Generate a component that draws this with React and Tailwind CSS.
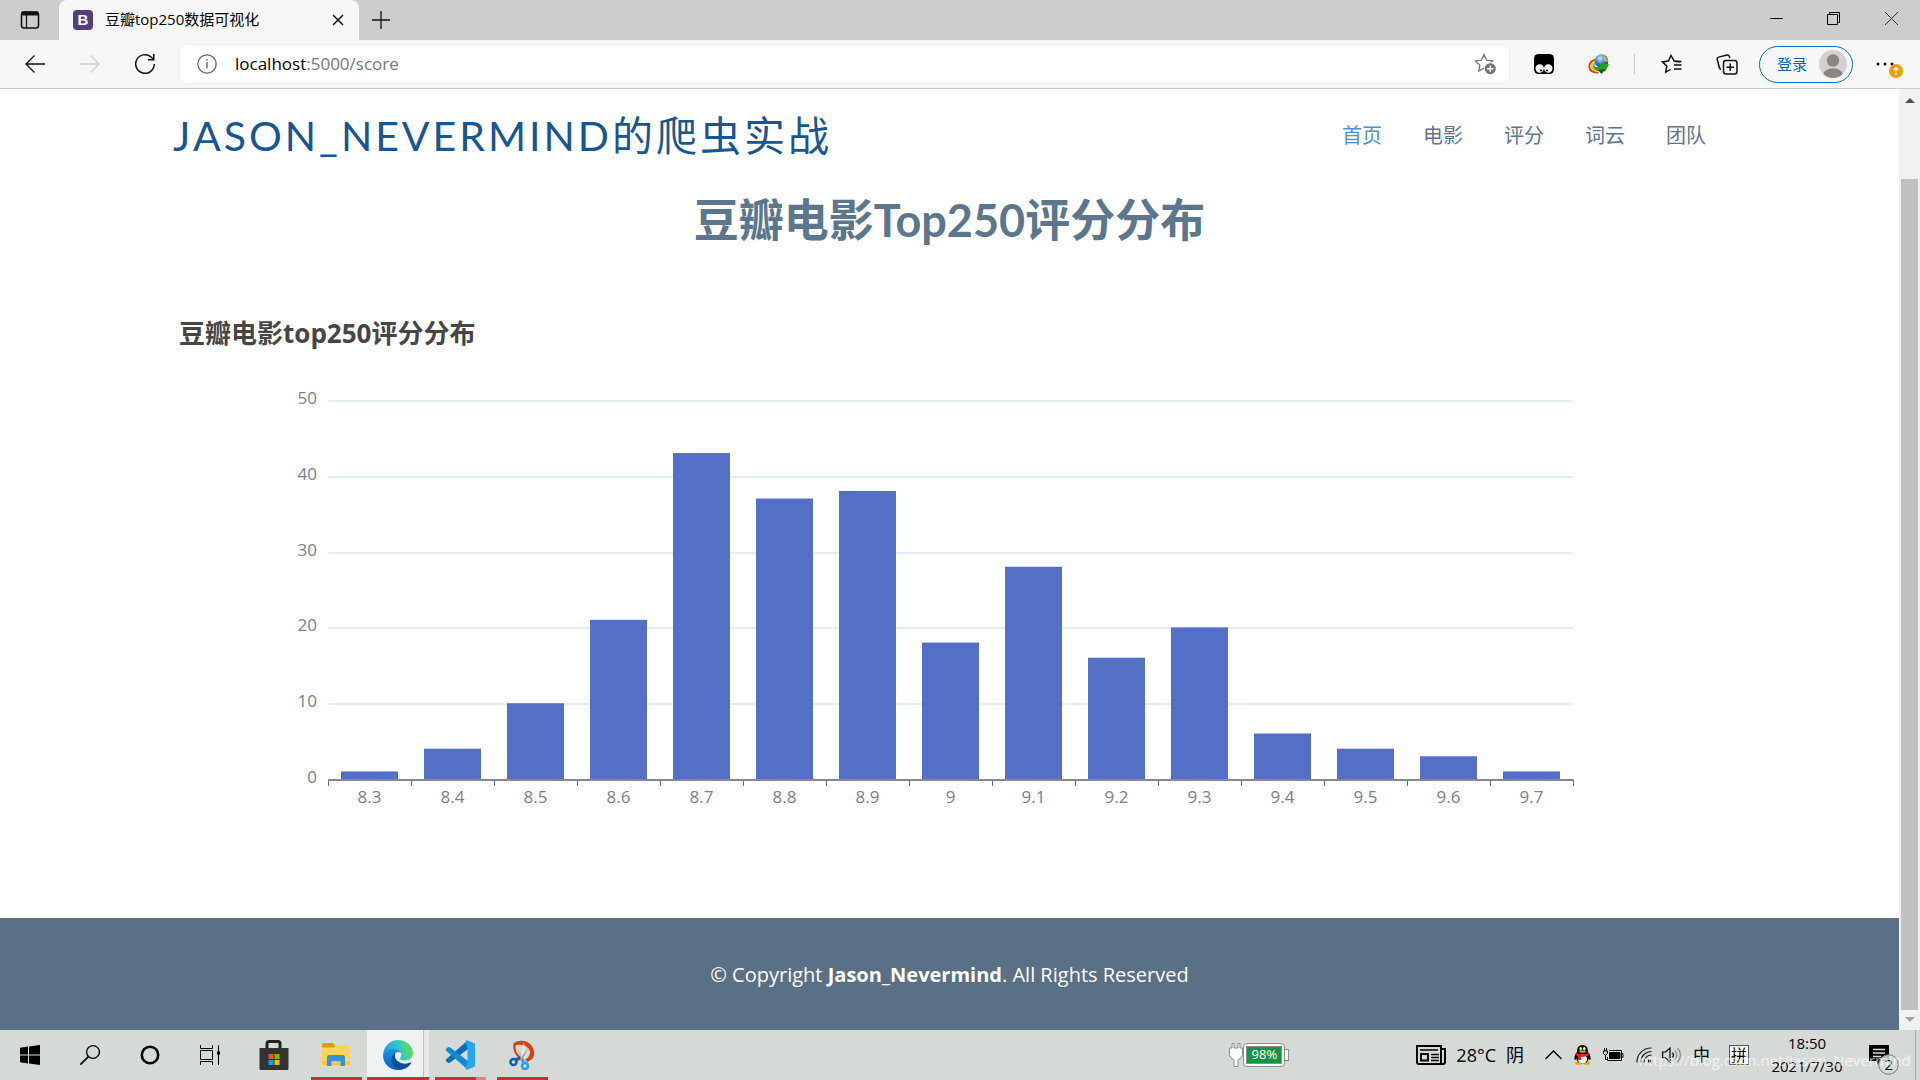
import React from "react";
import clsx from "clsx";

const scores = [
  { score: "8.3", count: 1 },
  { score: "8.4", count: 4 },
  { score: "8.5", count: 10 },
  { score: "8.6", count: 21 },
  { score: "8.7", count: 43 },
  { score: "8.8", count: 37 },
  { score: "8.9", count: 38 },
  { score: "9", count: 18 },
  { score: "9.1", count: 28 },
  { score: "9.2", count: 16 },
  { score: "9.3", count: 20 },
  { score: "9.4", count: 6 },
  { score: "9.5", count: 4 },
  { score: "9.6", count: 3 },
  { score: "9.7", count: 1 },
];

const navItems = ["首页", "电影", "评分", "词云", "团队"];

/* ---------- Browser chrome ---------- */

const TabBar = () => (
  <div className="flex h-10 shrink-0 bg-[#cdcdcd]">
    <button aria-label="标签页操作" className="flex w-[59px] items-center justify-center">
      <svg width="20" height="20" viewBox="0 0 20 20" fill="none" stroke="#111" strokeWidth="1.5">
        <rect x="1.5" y="2" width="17" height="16" rx="2.5" />
        <path d="M2 3.5h16" strokeWidth="4" />
        <path d="M6.5 5v13" strokeWidth="1.2" />
      </svg>
    </button>
    <div className="flex w-[300px] items-center rounded-t-lg bg-[#f7f7f7] pl-[14px] pr-[9px]">
      <span className="flex h-5 w-5 items-center justify-center rounded bg-[#563d7c] font-['Liberation_Sans',sans-serif] text-[15px] font-bold text-white">
        B
      </span>
      <span className="ml-3 flex-1 pb-[2px] text-[15px] text-black">豆瓣top250数据可视化</span>
      <button aria-label="关闭标签页" className="flex h-6 w-6 items-center justify-center">
        <svg width="12" height="12" viewBox="0 0 12 12" stroke="#111" strokeWidth="1.5">
          <path d="M1 1l10 10M11 1L1 11" />
        </svg>
      </button>
    </div>
    <button aria-label="新建标签页" className="flex w-[44px] items-center justify-center">
      <svg width="18" height="18" viewBox="0 0 18 18" stroke="#111" strokeWidth="1.3">
        <path d="M9 0v18M0 9h18" />
      </svg>
    </button>
    <div className="ml-auto flex h-[37px]">
      <button aria-label="最小化" className="flex w-[57px] items-center justify-center">
        <svg width="13" height="13" viewBox="0 0 13 13" stroke="#000">
          <path d="M0 6.5h13" />
        </svg>
      </button>
      <button aria-label="还原" className="flex w-[57px] items-center justify-center">
        <svg width="13" height="13" viewBox="0 0 13 13" fill="none" stroke="#000">
          <path d="M.5 2.5h10v10h-10zM2.5 2.5v-2h10v10h-2" />
        </svg>
      </button>
      <button aria-label="关闭" className="flex w-[58px] items-center justify-center">
        <svg width="13" height="13" viewBox="0 0 13 13" stroke="#333">
          <path d="M0 0l13 13M13 0L0 13" />
        </svg>
      </button>
    </div>
  </div>
);

const ToolButton = ({ label, className = "", children }) => (
  <button
    aria-label={label}
    className={clsx("flex h-full w-[55px] shrink-0 items-center justify-center", className)}
  >
    {children}
  </button>
);

const StarShape = "M10 1.5l2.6 5.6 6 .8-4.4 4.2 1.1 6L10 15.2 4.7 18.1l1.1-6L1.4 7.9l6-.8z";

const Toolbar = () => (
  <div className="flex h-[49px] shrink-0 items-center border-b border-[#cccccc] bg-[#f7f7f7] pl-[7px] pr-[3px]">
    <ToolButton label="返回">
      <svg width="20" height="18" viewBox="0 0 20 18" fill="none" stroke="#111" strokeWidth="1.4">
        <path d="M20 9H1M9.5 .5L1 9l8.5 8.5" />
      </svg>
    </ToolButton>
    <ToolButton label="前进">
      <svg width="20" height="18" viewBox="0 0 20 18" fill="none" stroke="#cfcfcf" strokeWidth="1.4">
        <path d="M0 9h19M10.500 .5L19 9l-8.500 8.500" />
      </svg>
    </ToolButton>
    <ToolButton label="刷新">
      <svg width="22" height="22" viewBox="0 0 22 22" fill="none" stroke="#111" strokeWidth="1.5">
        <path d="M20.3 11a9.3 9.3 0 1 1-3.2-7l2.4 2.2M19.8 1v5.7H14" />
      </svg>
    </ToolButton>
    <div className="ml-2 flex h-[38px] flex-1 items-center rounded-md bg-white pl-[17px] pr-3 shadow-[0_0_3px_rgba(0,0,0,0.08)]">
      <svg width="20" height="20" viewBox="0 0 20 20" fill="none" stroke="#666" strokeWidth="1.2">
        <circle cx="10" cy="10" r="9.2" />
        <path d="M10 8.3v6.2M10 5v1.6" strokeWidth="1.4" />
      </svg>
      <a href="#score" className="ml-[18px] flex-1 text-[17px] text-[#767676]">
        <span className="text-black">localhost</span>:5000/score
      </a>
      <button aria-label="添加到收藏夹">
        <svg width="23" height="22" viewBox="0 0 23 22" fill="none" stroke="#777" strokeWidth="1.3">
          <path d={StarShape} />
          <circle cx="16.3" cy="15.7" r="6" fill="#757575" stroke="#fff" strokeWidth="1" />
          <path d="M16.3 12.5v6.4M13.1 15.7h6.4" stroke="#fff" strokeWidth="1.4" />
        </svg>
      </button>
    </div>
    <ToolButton label="篡改猴" className="ml-[7px]">
      <svg width="20" height="20" viewBox="0 0 20 20">
        <rect width="20" height="20" rx="4.5" fill="#000" />
        <circle cx="5.7" cy="14.500" r="4.200" fill="#fff" />
        <circle cx="14.3" cy="14.500" r="4.200" fill="#fff" />
        <circle cx="7" cy="16.500" r="1.100" fill="#000" />
        <circle cx="13" cy="16.500" r="1.100" fill="#000" />
      </svg>
    </ToolButton>
    <ToolButton label="下载管理器">
      <svg width="21" height="20" viewBox="0 0 21 20">
        <defs>
          <radialGradient id="globe" cx="0.4" cy="0.3" r="0.7">
            <stop offset="0" stopColor="#d3e6f8" />
            <stop offset="0.5" stopColor="#4c86cf" />
            <stop offset="1" stopColor="#153a7c" />
          </radialGradient>
        </defs>
        <path d="M10 5.500C4 5 1 9 1.500 14c1 4 6 4.500 9 4.500" fill="none" stroke="#e03b24" strokeWidth="2" />
        <path d="M11 7C6 6.500 3 10 3.500 13.500c1 3 4 3.500 7 3.500" fill="none" stroke="#f5d327" strokeWidth="2.200" />
        <path d="M11 9c-4-.5-6 2-5.500 4.500.5 1.500 3 2 5 2" fill="none" stroke="#56b8e8" strokeWidth="2" />
        <circle cx="13.500" cy="7" r="6.800" fill="url(#globe)" />
        <path d="M14 1c3 .5 5.500 3 6 6.500-2.500 1-4.500-1-4-3z" fill="#c9b24a" />
        <path d="M5 12c3 1.500 6 1.500 8-.5L11.500 10H21l-4 8-1.500-2c-4 2-8.500 1-10.500-4z" fill="#23a51c" />
        <path d="M10 16l3.500 4 4-5z" fill="#0b5a12" />
      </svg>
    </ToolButton>
    <div className="ml-2 mr-[9px] h-5 w-px shrink-0 bg-[#c4c4c4]" />
    <ToolButton label="收藏夹">
      <svg width="21" height="20" viewBox="0 0 21 20" fill="none" stroke="#111" strokeWidth="1.5">
        <path d="M19.500 7.700l-6.300-.6L10 1.500 7.400 7.100l-6 .8 4.400 4.200-1.100 6 5-2.700" />
        <path d="M13 11h7.500M13 15h7.500M14 7.500h6.500" />
      </svg>
    </ToolButton>
    <ToolButton label="集锦">
      <svg width="22" height="21" viewBox="0 0 22 21" fill="none" stroke="#111" strokeWidth="1.5">
        <path d="M5 15.500a2 2 0 0 1-1.500-1.500L1.200 5.500a2 2 0 0 1 1.400-2.400L11 1a2 2 0 0 1 2.300 1.300l.5 1.700" />
        <rect x="7.500" y="6.500" width="13.500" height="13.500" rx="2.500" />
        <path d="M14.250 9.500v7.500M10.500 13.250H18" />
      </svg>
    </ToolButton>
    <button className="ml-[5px] flex h-[37px] w-[94px] shrink-0 items-center justify-between rounded-full border border-[#0f6cbd] pl-[17px] pr-[5px] text-[15px] text-[#0067b8]">
      登录
      <svg width="28" height="28" viewBox="0 0 28 28">
        <defs>
          <clipPath id="avatar">
            <circle cx="14" cy="14" r="14" />
          </clipPath>
        </defs>
        <g clipPath="url(#avatar)">
          <rect width="28" height="28" fill="#d3d1ce" />
          <circle cx="14" cy="10.500" r="6.200" fill="#8a8683" />
          <ellipse cx="14" cy="25" rx="10" ry="6.800" fill="#8a8683" />
        </g>
      </svg>
    </button>
    <ToolButton label="设置及其他" className="relative w-[64px]">
      <svg width="18" height="4" viewBox="0 0 18 4" fill="#111">
        <circle cx="2" cy="2" r="1.500" />
        <circle cx="9" cy="2" r="1.500" />
        <circle cx="16" cy="2" r="1.500" />
      </svg>
      <span className="absolute right-[14px] top-6">
        <svg width="14" height="14" viewBox="0 0 14 14">
          <circle cx="7" cy="7" r="7" fill="#f59a0c" />
          <path d="M7 11V3.500M4.500 6L7 3.500 9.500 6" fill="none" stroke="#fff" strokeWidth="1.300" />
        </svg>
      </span>
    </ToolButton>
  </div>
);

const Scrollbar = () => (
  <div className="flex w-[21px] shrink-0 flex-col items-center bg-[#f1f1f1]">
    <svg className="h-[22px]" width="10" viewBox="0 0 10 22" fill="#505050">
      <path d="M5 9l5 5H0z" />
    </svg>
    <div className="mt-[68px] w-[17px] flex-1 bg-[#c1c1c1]" />
    <svg className="mb-1" width="10" height="16" viewBox="0 0 10 16" fill="#a3a3a3">
      <path d="M5 12L0 7h10z" />
    </svg>
  </div>
);

/* ---------- Page ---------- */

const ScoreChart = () => {
  const left = 157;
  const right = 1402;
  const bottom = 419;
  const unit = 7.58;
  const step = (right - left) / scores.length;
  const barWidth = 57;

  return (
    <svg
      role="img"
      aria-label="豆瓣电影top250评分分布"
      viewBox="0 0 1557 460"
      className="block h-auto w-full text-[17px]"
    >
      {[0, 10, 20, 30, 40, 50].map((value) => {
        const y = Math.round(bottom - value * unit);
        return (
          <g key={value}>
            {value > 0 && (
              <rect x={left} y={y} width={right - left} height="2" fill="#e6ecf5" />
            )}
            <text x={left - 11} y={y + 4} textAnchor="end" fill="#7d8087">
              {value}
            </text>
          </g>
        );
      })}
      {scores.map(({ score, count }, index) => (
        <g key={score}>
          <rect
            x={left + step * index + (step - barWidth) / 2}
            y={bottom - count * unit}
            width={barWidth}
            height={count * unit}
            fill="#5470c6"
          />
          <text x={left + step * (index + 0.5)} y="443" textAnchor="middle" fill="#7d8087">
            {score}
          </text>
        </g>
      ))}
      <rect x={left} y={bottom} width={right - left + 1} height="2" fill="#85888f" />
      {Array.from({ length: scores.length + 1 }, (_, index) => (
        <rect
          key={index}
          x={Math.round(left + step * index)}
          y={bottom + 1}
          width="1"
          height="6"
          fill="#6e7079"
        />
      ))}
    </svg>
  );
};

const Page = () => (
  <main className="flex min-w-0 flex-1 flex-col bg-white">
    <div className="mx-auto w-full max-w-[1557px]">
      <header className="flex h-[94px] items-center justify-between pl-[2px] pr-[22px]">
        <h1 className="font-[Lato,'Noto_Sans_CJK_SC',sans-serif] text-[41px] font-normal tracking-[3px] text-[#17568f]">
          <a href="#home">JASON_NEVERMIND的爬虫实战</a>
        </h1>
        <nav className="flex gap-[41px] text-xl">
          {navItems.map((item, index) => (
            <a
              key={item}
              href={`#${item}`}
              className={index === 0 ? "text-[#4a90d6]" : "text-[#5c768d]"}
            >
              {item}
            </a>
          ))}
        </nav>
      </header>
      <h2 className="mt-2 text-center font-[Lato,'Noto_Sans_CJK_SC',sans-serif] text-[45px] font-bold leading-[58px] text-[#5c768d]">
        豆瓣电影Top250评分分布
      </h2>
      <h3 className="mt-[67px] pl-2 text-[26px] font-bold leading-[34px] text-[#464646]">
        豆瓣电影top250评分分布
      </h3>
      <div className="mt-[10px]">
        <ScoreChart />
      </div>
    </div>
    <footer className="mt-auto flex h-28 items-center justify-center bg-[#5a7086] pt-[2px] text-xl text-white">
      <p>
        © Copyright <strong>Jason_Nevermind</strong>. All Rights Reserved
      </p>
    </footer>
  </main>
);

/* ---------- Taskbar ---------- */

const TaskButton = ({ label, active, running, stacked, wide = true, children }) => (
  <button
    aria-label={label}
    className={clsx(
      "flex flex-col items-center",
      wide ? "w-[62px]" : "w-[60px]",
      active && "bg-[linear-gradient(to_right,#f0f2f1_56px,#bfc3c0_56px,#bfc3c0_57px,#e6e9e7_57px)]"
    )}
  >
    <span className="flex flex-1 items-center pt-[3px]">{children}</span>
    <span
      className={clsx(
        "flex h-[3px]",
        active ? "w-full" : "w-[51px]",
        running && "bg-[#cb2c35]"
      )}
    >
      {stacked && <span className="ml-auto h-full w-[10px] bg-[#e08188]" />}
    </span>
  </button>
);

const StoreIcon = () => (
  <svg width="30" height="30" viewBox="0 0 30 30">
    <path d="M8 9V3.500Q8 1.500 10 1.500h9Q21 1.500 21 3.500V9" fill="none" stroke="#222" strokeWidth="3" />
    <path d="M.5 8h29v20.500q0 1.500-1.500 1.500H2Q.5 30 .5 28.500z" fill="#333" />
    <path fill="#f25022" d="M9.500 14h5v5h-5z" />
    <path fill="#7fba00" d="M15.500 14h5v5h-5z" />
    <path fill="#00a4ef" d="M9.500 20h5v5h-5z" />
    <path fill="#ffb900" d="M15.500 20h5v5h-5z" />
  </svg>
);

const FolderIcon = () => (
  <svg width="28" height="24" viewBox="0 0 28 24">
    <path d="M0 1.500Q0 0 1.500 0H11l3 3.500V8H0z" fill="#e09d00" />
    <path d="M0 4.500h12L14.500 2H26q1.500 0 1.500 1.500V22H0z" fill="#ffd45e" />
    <path d="M0 18h28v4H0z" fill="#f7c444" />
    <path d="M5 23V14q0-2 2-2h14q2 0 2 2v9h-4.500v-5h-9v5z" fill="#3f8fd0" />
  </svg>
);

const EdgeIcon = () => (
  <svg width="30" height="30" viewBox="0 0 24 24">
    <defs>
      <linearGradient id="edge-top" x1="0" y1="0.6" x2="1" y2="0.4">
        <stop offset="0" stopColor="#1b9de2" />
        <stop offset="0.5" stopColor="#2fc5d3" />
        <stop offset="1" stopColor="#66de4a" />
      </linearGradient>
      <linearGradient id="edge-left" x1="0.5" y1="0" x2="0.5" y2="1">
        <stop offset="0" stopColor="#1a96df" />
        <stop offset="1" stopColor="#0b62bd" />
      </linearGradient>
    </defs>
    <path
      d="M.1 11.300C.7 5 5.700 0 12 0c7 0 12 5.200 12 10.600 0 3.400-2.700 5.800-6.200 5.800-3 0-4.300-1-4.300-1.700 0-.6 1.100-1 1.100-2.900C14.600 9 12 6.900 8.600 6.900 4.500 6.900 1.300 8.500.1 11.300z"
      fill="url(#edge-top)"
    />
    <path
      d="M.1 11.300C1.400 8.300 4.600 6.800 8.200 6.800c3.300 0 5.600 1.800 6.200 3.600-1-.8-2-1-3.200-.6C9 10.600 7.900 13 8.300 15.500c.5 3.700 3.700 7 8 7.600-1.300.6-2.700.9-4.300.9C5 24-.5 18.300.1 11.300z"
      fill="url(#edge-left)"
    />
    <path
      d="M10 10.400c-3 1.500-4 5-2.600 8.300 1.300 3 4.600 5.400 8.500 4.700 2.900-.8 5.300-2.700 6.600-4.900.2-.5-.2-.8-.7-.5-1.200.6-2.600.9-4 .9-4.400 0-8.300-2.900-8.300-6.600 0-.7.200-1.300.5-1.900z"
      fill="#0d4f9c"
    />
  </svg>
);

const CodeIcon = () => (
  <svg width="30" height="30" viewBox="0 0 30 30">
    <path d="M22 1L1.200 19.200q-1 1 0 2l1.600 1.500q1 .8 2 0L23 9z" fill="#0a6db8" />
    <path d="M22 29L1.200 10.800q-1-1 0-2l1.600-1.500q1-.8 2 0L23 21z" fill="#118ad4" />
    <path d="M21.500 0L30 3.500v23L21.500 30l-1-1.500L22.500 22V8l-2-6.500z" fill="#27a4f2" />
  </svg>
);

const SnipIcon = () => (
  <svg width="26" height="30" viewBox="0 0 26 30">
    <path d="M4 4C9-1 22-1 25 11c1 6-2 9-7 11l-1.500-2.500c5-3 5.500-8 3-11C17 4.500 10 3.500 5 6z" fill="#d9400b" />
    <path d="M5.500 5c-1 7 4 14 12 15" fill="none" stroke="#c9380c" strokeWidth="2" />
    <path d="M7 7l10 14-3 1z" fill="#b5bbc0" />
    <path d="M15 2l1.500 19-5-2z" fill="#e9ecee" />
    <path d="M19 7l-9 14 4-1z" fill="#9fa6ac" />
    <circle cx="4.500" cy="22" r="3" fill="none" stroke="#0d62b5" strokeWidth="2.600" />
    <path d="M6 20l5-2" stroke="#0d62b5" strokeWidth="3" />
    <circle cx="16" cy="26" r="3" fill="none" stroke="#2d9fe6" strokeWidth="2.600" />
    <path d="M14.500 23l-1-4" stroke="#2d9fe6" strokeWidth="3" />
  </svg>
);

const QQIcon = () => (
  <svg width="17" height="20" viewBox="0 0 17 20">
    <ellipse cx="4.500" cy="18.200" rx="3.500" ry="1.600" fill="#f5a300" />
    <ellipse cx="12.500" cy="18.200" rx="3.500" ry="1.600" fill="#f5a300" />
    <path d="M3 7C3 2 5 0 8.500 0S14 2 14 7c2 2 3 5 2.500 8-1 .3-1.500-1-2-1.500 0 3-3 5-6 5s-6-2-6-5C2 14 1.500 15.300.5 15 0 12 1 9 3 7z" fill="#111" />
    <ellipse cx="8.500" cy="14" rx="4.500" ry="4.500" fill="#fff" />
    <ellipse cx="6.700" cy="3.800" rx="1.200" ry="1.700" fill="#fff" />
    <ellipse cx="10.300" cy="3.800" rx="1.200" ry="1.700" fill="#fff" />
    <ellipse cx="8.500" cy="6.600" rx="3.500" ry="1.100" fill="#f5a300" />
    <path d="M2.500 8q6 3 12 0l.5 2.200q-4 2-8 1.800v3H4v-3.700L2 10z" fill="#e62129" />
  </svg>
);

const Taskbar = () => (
  <div className="flex h-[50px] shrink-0 justify-between bg-[#d6dad7] text-black">
    <div className="flex">
      <TaskButton label="开始" wide={false}>
        <svg width="20" height="20" viewBox="0 0 20 20">
          <path d="M0 2.700L8 1.500v8H0zM9 1.400L20 0v9.500H9zM0 10.500h8v8L0 17.300zM9 10.500h11V20L9 18.600z" />
        </svg>
      </TaskButton>
      <TaskButton label="搜索" wide={false}>
        <svg width="20" height="20" viewBox="0 0 20 20" fill="none" stroke="#000" strokeWidth="1.300">
          <circle cx="13" cy="7" r="6.400" />
          <path d="M8.400 11.600L.4 19.600" strokeWidth="1.600" />
        </svg>
      </TaskButton>
      <TaskButton label="Cortana" wide={false}>
        <svg width="20" height="20" viewBox="0 0 20 20" fill="none" stroke="#000" strokeWidth="2.600">
          <circle cx="10" cy="10" r="8.200" />
        </svg>
      </TaskButton>
      <TaskButton label="任务视图" wide={false}>
        <svg width="20" height="20" viewBox="0 0 20 20" fill="none" stroke="#000">
          <path d="M.5 0v3.500h12V0M.5 5.500h12v9H.5zM.5 20v-3.500h12V20M18.500 0v20" />
          <path d="M17 6.500h3v3h-3z" fill="#000" stroke="none" />
        </svg>
      </TaskButton>
      <div className="ml-[3px] flex">
        <TaskButton label="Microsoft Store"><StoreIcon /></TaskButton>
        <TaskButton label="文件资源管理器" running><FolderIcon /></TaskButton>
        <TaskButton label="Microsoft Edge" running active><EdgeIcon /></TaskButton>
        <TaskButton label="Visual Studio Code" running stacked><CodeIcon /></TaskButton>
        <TaskButton label="截图工具" running><SnipIcon /></TaskButton>
      </div>
    </div>

    <div className="flex items-stretch">
      <div className="mr-[127px] flex items-center">
        <svg width="14" height="24" viewBox="0 0 14 24" fill="#fff" stroke="#8b8f8c">
          <path d="M3 .5h2V5h4V.5h2V5h2.500v6q0 4-4.500 5.500v7H5v-7Q.5 15 .5 11V5H3z" />
        </svg>
        <span className="rounded-sm border border-[#8b8f8c] bg-white p-[2px]">
          <span className="flex h-[18px] w-9 items-center justify-center border border-[#8b8f8c] bg-[#159447] text-[13px] text-white">
            98%
          </span>
        </span>
        <span className="h-3 w-1 border border-l-0 border-[#8b8f8c] bg-white" />
      </div>
      <button className="flex items-center gap-[10px] pr-[14px] text-[18px]">
        <svg width="30" height="20" viewBox="0 0 30 20" fill="none" stroke="#000" strokeWidth="2">
          <path d="M1 1h24v18H3q-2 0-2-2zM25 4h4v13q0 2-2 2h-2" />
          <path d="M4 5h18M15 9.500h8M15 12.500h8M15 15.500h8" strokeWidth="1.500" />
          <path d="M5 9h7v6.500H5z" />
        </svg>
        <span>28°C</span>
        <span>阴</span>
      </button>
      <button aria-label="显示隐藏的图标" className="flex w-[30px] items-center justify-center">
        <svg width="17" height="10" viewBox="0 0 17 10" fill="none" stroke="#000" strokeWidth="1.300">
          <path d="M.5 9l8-8 8 8" />
        </svg>
      </button>
      <button aria-label="QQ" className="flex w-7 items-center justify-center"><QQIcon /></button>
      <button aria-label="电池" className="flex w-[34px] items-center justify-center">
        <svg width="21" height="14" viewBox="0 0 21 14" fill="none" stroke="#000">
          <path d="M6 2.500h12.500v10H4.500V9M18.500 5.500h1.500v4h-1.500" />
          <path d="M6.500 4.500H17v6H6.500z" fill="#000" />
          <path d="M1.500 0v3M3.500 0v3M.5 3h4v2.500L3 7H2L.5 5.500zM2.500 7v4.500h2" />
        </svg>
      </button>
      <button aria-label="网络" className="flex w-7 items-center justify-center">
        <svg width="17" height="17" viewBox="0 0 17 17" fill="none" stroke="#222" strokeWidth="1.200">
          <path d="M1 15.500A14 14 0 0 1 15.500 1M4.500 15.500a11 11 0 0 1 11-11M8 15.500A7.500 7.500 0 0 1 15.500 8" />
          <circle cx="13.500" cy="14" r="1.700" fill="#000" stroke="none" />
        </svg>
      </button>
      <button aria-label="音量" className="flex w-7 items-center justify-center">
        <svg width="20" height="18" viewBox="0 0 20 18" fill="none" stroke="#000" strokeWidth="1.200">
          <path d="M.6 6h3L8 2v14l-4.400-4h-3z" />
          <path d="M10.500 6.500q2 2.500 0 5" />
          <path d="M13 4.500q3.500 4.500 0 9M15.500 2q6 7 0 14" stroke="#888" />
        </svg>
      </button>
      <button className="flex w-[31px] items-center justify-center text-[17px]">中</button>
      <button className="flex w-11 items-center justify-center">
        <span className="flex h-5 w-5 items-center justify-center border border-[#555] bg-white text-base leading-none">
          拼
        </span>
      </button>
      <button className="flex w-[92px] flex-col items-center justify-center text-[15px] leading-[23px]">
        <span>18:50</span>
        <span>2021/7/30</span>
      </button>
      <button aria-label="通知" className="relative flex w-[62px] justify-center">
        <svg className="mt-[15px]" width="30" height="30" viewBox="0 0 30 30">
          <path d="M0 0h20v16h-8l-4 4v-4H0z" />
          <path d="M4 4.500h12M4 8h12M4 11.500h8" stroke="#d6dad7" strokeWidth="1.300" />
          <circle cx="19.500" cy="19.500" r="9.800" fill="#d6dad7" fillOpacity="0.850" stroke="#777" />
        </svg>
        <span className="absolute right-[22px] top-[23px] text-[15px] leading-[22px]">2</span>
      </button>
      <div className="w-[5px] border-l border-[#a5a9a6]" />
    </div>
  </div>
);

const App = () => (
  <div className="relative flex h-screen flex-col overflow-hidden font-['Open_Sans','Noto_Sans_CJK_SC',sans-serif]">
    <TabBar />
    <Toolbar />
    <div className="flex min-h-0 flex-1">
      <Page />
      <Scrollbar />
    </div>
    <Taskbar />
    <span className="pointer-events-none absolute bottom-[9px] right-[9px] font-['Open_Sans',sans-serif] text-[15px] text-white/70">
      https://blog.csdn.net/Jason_Nevermind
    </span>
  </div>
);

export default App;
